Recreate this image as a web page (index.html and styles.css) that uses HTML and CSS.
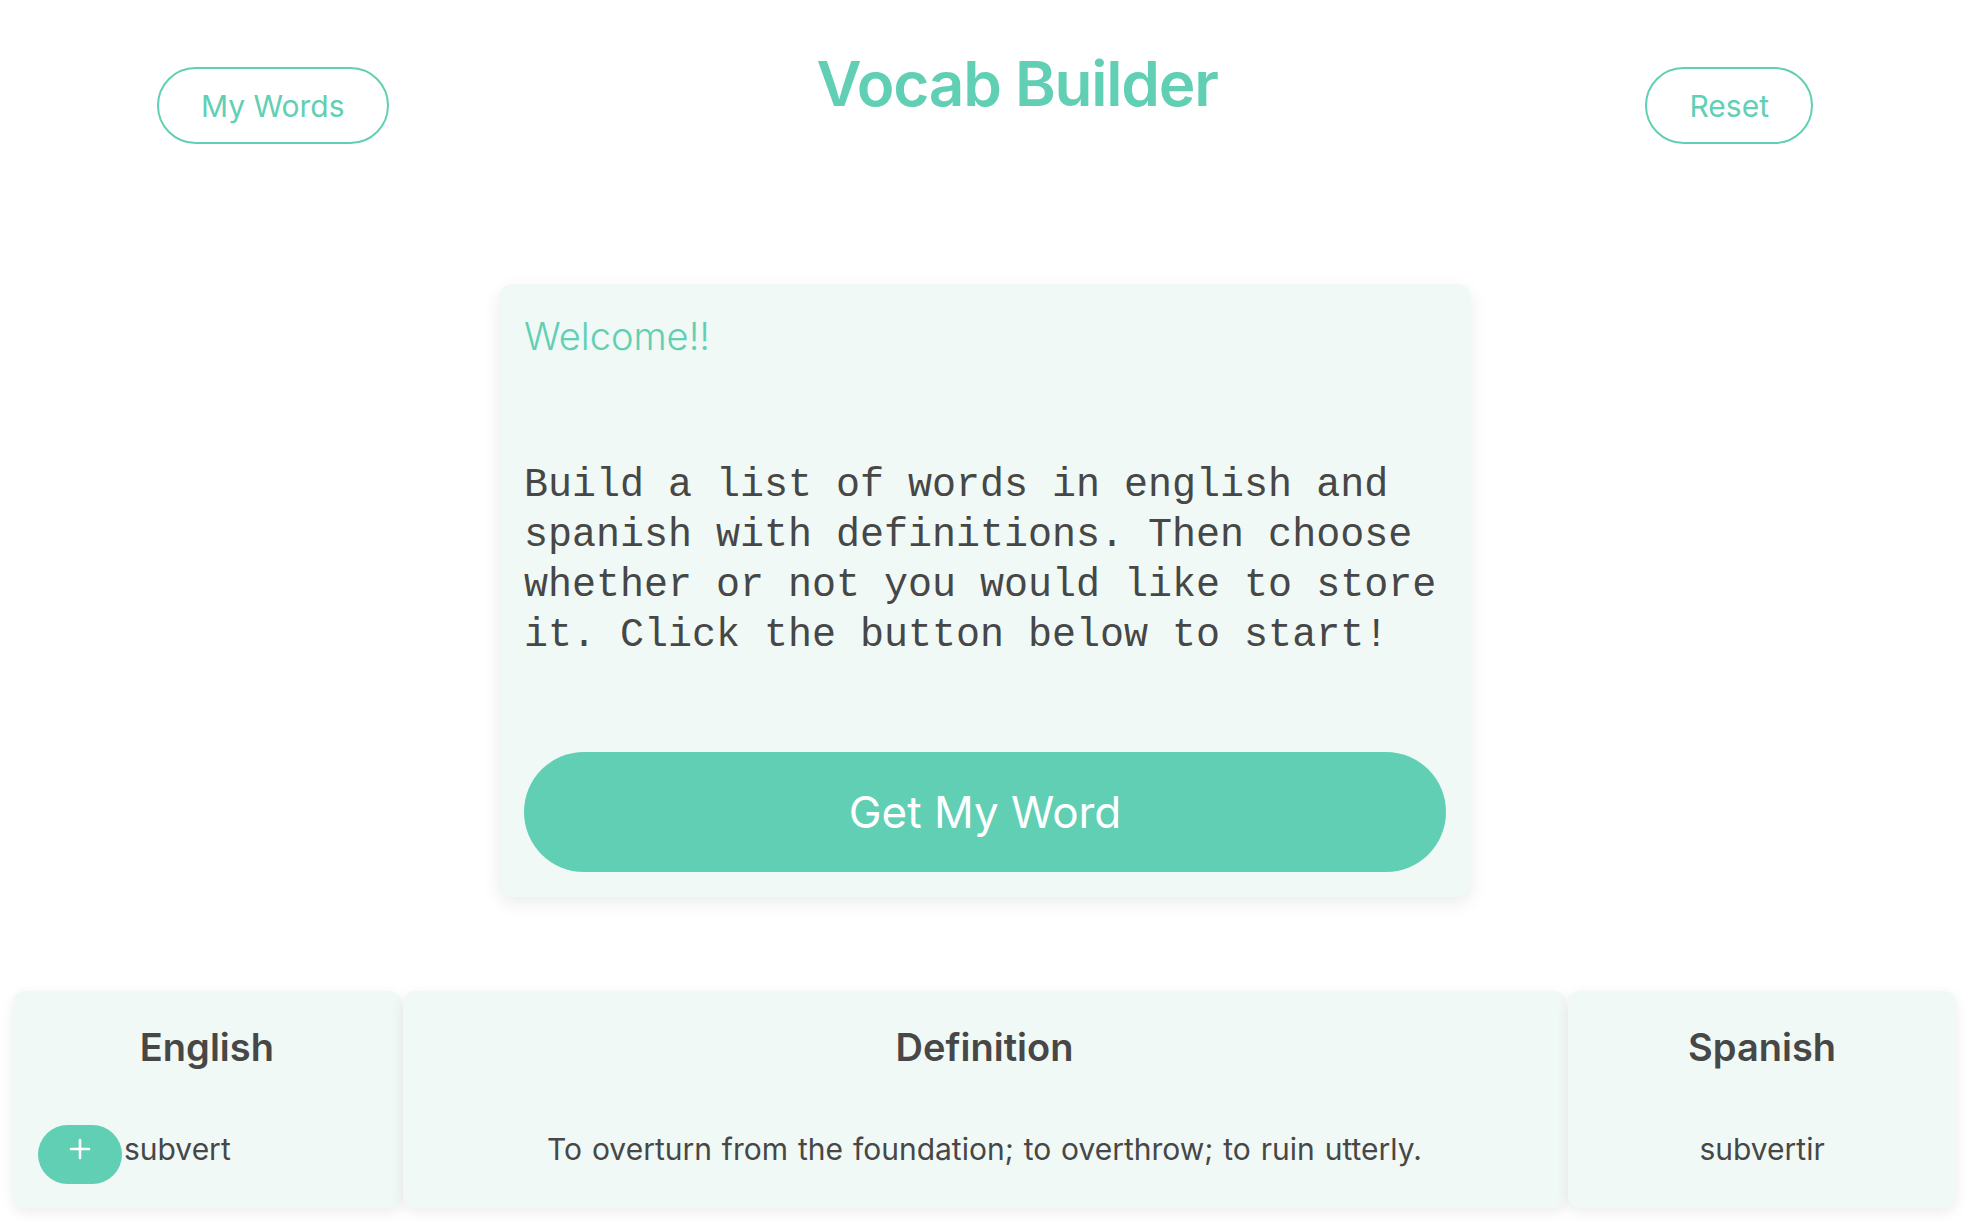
FILE: index.html
```html
<!DOCTYPE html>
<html lang="en">
<head>
<meta charset="utf-8">
<title>Vocab Builder</title>
<link rel="stylesheet" href="styles.css">
</head>
<body>
<div class="app">
  <header class="topbar">
    <button class="pill-btn">My Words</button>
    <h1 class="title">Vocab Builder</h1>
    <button class="pill-btn">Reset</button>
  </header>

  <main class="stage">
    <section class="welcome-card">
      <h2 class="welcome">Welcome!!</h2>
      <p class="intro">Build a list of words in english and spanish with definitions. Then choose whether or not you would like to store it. Click the button below to start!</p>
      <button class="get-btn">Get My Word</button>
    </section>
  </main>

  <section class="word-table">
    <div class="col">
      <h3 class="col-head">English</h3>
      <div class="col-row row-left">
        <button class="add-btn" aria-label="Add">
          <svg class="plus" width="22" height="22" viewBox="0 0 22 22"><path d="M11 2v18M2 11h18" stroke="#ffffff" stroke-width="2.6" stroke-linecap="round" fill="none"/></svg>
        </button>
        <span>subvert</span>
      </div>
    </div>
    <div class="col">
      <h3 class="col-head">Definition</h3>
      <div class="col-row row-def">To overturn from the foundation; to overthrow; to ruin utterly.</div>
    </div>
    <div class="col">
      <h3 class="col-head">Spanish</h3>
      <div class="col-row">subvertir</div>
    </div>
  </section>
</div>
</body>
</html>
```

FILE: styles.css
```css
* { box-sizing: border-box; }

html, body {
  margin: 0;
  padding: 0;
  background: #ffffff;
}

body {
  font-family: Inter, "Noto Sans", "Liberation Sans", sans-serif;
  color: #474747;
}

.app {
  width: 1970px;
  padding-bottom: 40px;
}

.topbar {
  display: flex;
  justify-content: space-between;
  align-items: flex-start;
  padding: 46px 157px 0;
}

.pill-btn {
  margin-top: 21px;
  height: 77px;
  padding: 0 42px;
  border: 2px solid #61cfb3;
  border-radius: 40px;
  background: #ffffff;
  color: #61cfb3;
  font-family: inherit;
  font-size: 30px;
  font-weight: 400;
  line-height: 1;
}

.title {
  margin: 0;
  font-size: 62px;
  font-weight: 600;
  letter-spacing: -0.02em;
  line-height: 1.21;
  color: #61cfb3;
}

.stage {
  display: flex;
  justify-content: center;
  padding-top: 140px;
}

.welcome-card {
  width: 972px;
  padding: 25px;
  background: #f0f9f5;
  border-radius: 14px;
  box-shadow: 0 6px 18px rgba(0, 0, 0, 0.08);
}

.welcome {
  margin: 5px 0 0;
  font-size: 38px;
  font-weight: 300;
  line-height: 1.21;
  color: #61cfb3;
}

.intro {
  margin: 101px 0 91px;
  font-family: "Liberation Mono", "DejaVu Sans Mono", monospace;
  font-size: 40px;
  line-height: 50px;
  color: #474747;
}

.get-btn {
  display: block;
  width: 100%;
  height: 120px;
  border: 0;
  border-radius: 60px;
  background: #61cfb3;
  color: #ffffff;
  font-family: inherit;
  font-size: 44px;
  font-weight: 400;
}

.word-table {
  display: grid;
  grid-template-columns: 1fr 3fr 1fr;
  gap: 2px;
  margin: 94px 14px 0 13px;
}

.col {
  padding: 34px 25px 24px;
  background: #f0f9f5;
  border-radius: 12px;
  box-shadow: 0 4px 14px rgba(0, 0, 0, 0.08);
  text-align: center;
}

.col-head {
  margin: 0 0 54px;
  font-size: 38px;
  font-weight: 600;
  line-height: 1.21;
  color: #474747;
}

.col-row {
  display: flex;
  align-items: flex-start;
  justify-content: center;
  height: 59px;
  font-size: 30px;
  line-height: 48px;
  color: #474747;
}

.row-left {
  justify-content: flex-start;
}

.row-def {
  word-spacing: 1.5px;
}

.add-btn {
  display: flex;
  align-self: center;
  align-items: center;
  justify-content: center;
  width: 84px;
  height: 59px;
  margin-right: 2px;
  padding: 0;
  border: 0;
  border-radius: 30px;
  background: #61cfb3;
}

.plus {
  margin-bottom: 10px;
}
```
